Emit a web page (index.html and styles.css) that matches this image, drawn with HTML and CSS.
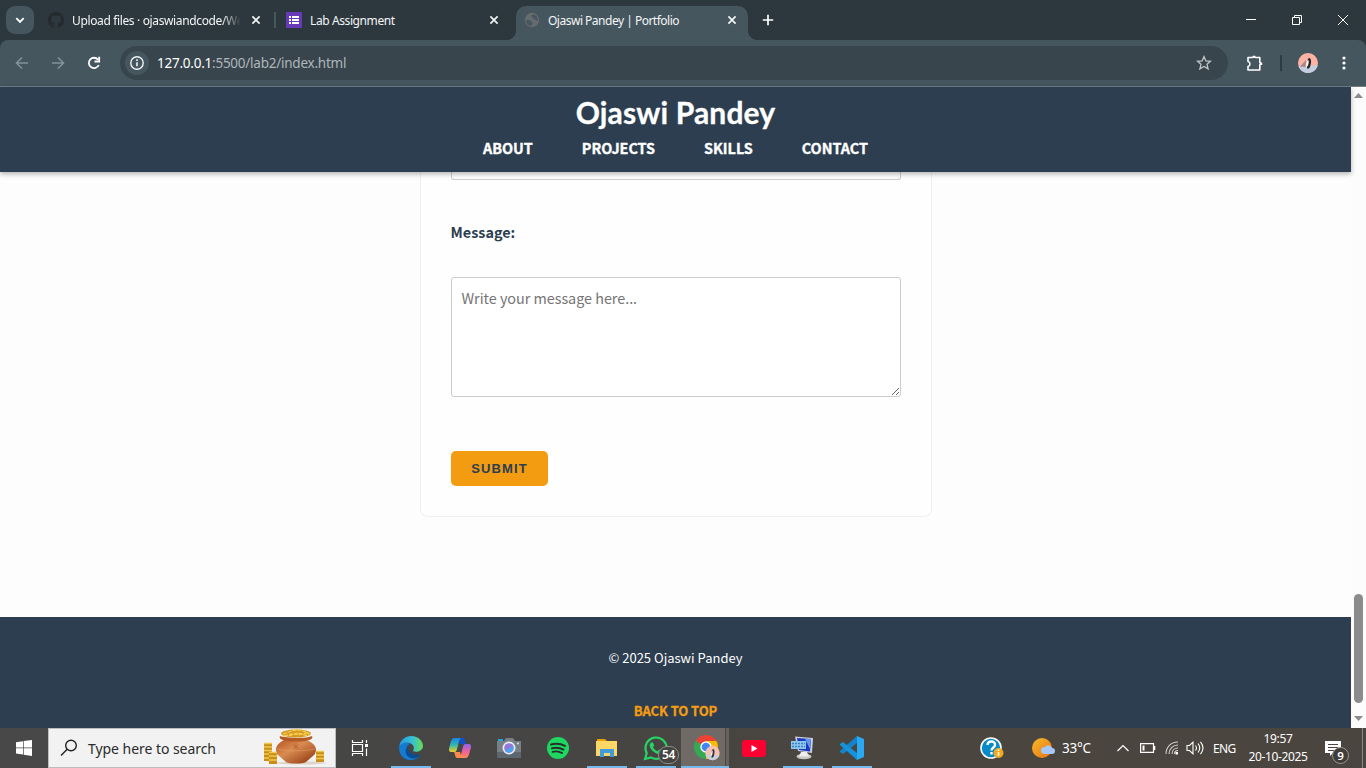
FILE: index.html
```html
<!DOCTYPE html>
<html lang="en">
<head>
<meta charset="utf-8">
<title>Ojaswi Pandey | Portfolio</title>
<link rel="stylesheet" href="styles.css">
</head>
<body>
<div class="screen">
  <div class="tabstrip">
    <div class="tab-search"><svg width="28" height="28" viewBox="0 0 28 28"><path d="M10.3 12.2L14 15.9l3.7-3.7" fill="none" stroke="#fff" stroke-width="1.9"/></svg></div>
    <div class="tab tab-first">
      <svg class="favicon" width="16" height="16" viewBox="0 0 16 16"><path fill="#24292e" d="M8 0C3.58 0 0 3.58 0 8c0 3.54 2.29 6.53 5.47 7.59.4.07.55-.17.55-.38v-1.49C3.8 14.2 3.33 12.65 3.33 12.65c-.36-.92-.89-1.17-.89-1.17-.73-.5.06-.49.06-.49.8.06 1.22.83 1.22.83.71 1.22 1.87.87 2.33.66.07-.52.28-.87.5-1.07-1.77-.2-3.64-.89-3.64-3.95 0-.87.31-1.59.82-2.15-.08-.2-.36-1.02.08-2.12 0 0 .67-.21 2.2.82a7.6 7.6 0 0 1 4 0c1.53-1.04 2.2-.82 2.2-.82.44 1.1.16 1.92.08 2.12.51.56.82 1.27.82 2.15 0 3.07-1.87 3.75-3.65 3.95.29.25.54.73.54 1.48v2.2c0 .21.15.46.55.38A8 8 0 0 0 16 8c0-4.42-3.58-8-8-8z"/></svg>
      <span class="tab-title fade">Upload files · ojaswiandcode/We</span>
      <svg class="tab-close" width="16" height="16" viewBox="0 0 16 16"><path d="M4.4 4.4l7.2 7.2M11.6 4.4l-7.2 7.2"/></svg>
    </div>
    <div class="tab-sep"></div>
    <div class="tab tab-second">
      <svg class="favicon" width="16" height="16" viewBox="0 0 16 16"><rect width="16" height="16" rx="1" fill="#673ab7"/><path fill="#fff" d="M3 4h2v2H3zm3 0h7v2H6zM3 7h2v2H3zm3 0h7v2H6zm-3 3h2v2H3zm3 0h7v2H6z"/></svg>
      <span class="tab-title">Lab Assignment</span>
      <svg class="tab-close" width="16" height="16" viewBox="0 0 16 16"><path d="M4.4 4.4l7.2 7.2M11.6 4.4l-7.2 7.2"/></svg>
    </div>
    <div class="tab tab-active">
      <svg class="favicon" width="16" height="16" viewBox="0 0 16 16"><circle cx="8" cy="8" r="7.2" fill="#666b6e"/><path fill="#45565f" d="M2.1 8.2c1.3-.3 3.1-.3 4.3.4 1 .6.7 1.5 1.7 1.8.8.3.6 1.1 0 1.5-.5.4-.2 1.2-.6 1.9C4.5 13.7 2.1 11.2 2.1 8.2zM8.8 2.2L7.3 3.8l.3 1.5 1.8.4.3 1.7 1.8.1.9 1.3 1.4-.1C14.1 5.3 11.8 2.5 8.8 2.2z"/></svg>
      <span class="tab-title">Ojaswi Pandey | Portfolio</span>
      <svg class="tab-close" width="16" height="16" viewBox="0 0 16 16"><path d="M4.4 4.4l7.2 7.2M11.6 4.4l-7.2 7.2"/></svg>
    </div>
    <div class="new-tab"><svg width="12" height="12" viewBox="0 0 12 12"><path d="M6 .8v10.4M.8 6h10.4" stroke="#fff" stroke-width="1.7"/></svg></div>
    <div class="window-buttons">
      <svg width="46" height="40" viewBox="0 0 46 40"><path d="M18 19.5h10"/></svg>
      <svg width="46" height="40" viewBox="0 0 46 40"><path d="M18.5 17.5h7v7h-7zM20.500 17.500v-2h7v7h-2"/></svg>
      <svg width="46" height="40" viewBox="0 0 46 40"><path d="M18 15l10 10M28 15l-10 10"/></svg>
    </div>
  </div>

  <div class="toolbar">
    <div class="nav-buttons">
      <svg width="36" height="46" viewBox="0 0 36 46"><path class="dim" d="M28 23H17M22 17.5L16.500 23l5.500 5.500"/></svg>
      <svg width="36" height="46" viewBox="0 0 36 46"><path class="dim" d="M16 23h11M22 17.5l5.500 5.500-5.500 5.500"/></svg>
      <svg width="36" height="46" viewBox="0 0 36 46"><path class="bright" d="M26.800 25A5.200 5.200 0 1 1 26 19.600M27.200 16.800v4.700h-4.700"/></svg>
    </div>
    <div class="omnibox">
      <div class="site-info"><svg width="24" height="24" viewBox="0 0 24 24"><circle cx="12" cy="12" r="6.2" fill="none" stroke="#f1f3f4" stroke-width="1.4"/><path d="M12 11.2v4M12 8.300v1.600" stroke="#f1f3f4" stroke-width="1.6"/></svg></div>
      <span class="url"><b>127.0.0.1</b>:5500/lab2/index.html</span>
      <svg class="star" width="16" height="16" viewBox="0 0 16 16"><path d="M8 1.600l1.900 4.300 4.600.4-3.500 3 1.100 4.600L8 11.500l-4.100 2.400L5 9.300l-3.500-3 4.600-.4z" fill="none" stroke="#c0c5c8" stroke-width="1.3"/></svg>
    </div>
    <svg class="extensions" width="18" height="18" viewBox="0 0 18 18"><path d="M2 3.500h4.500a1.800 1 0 0 1 3 0h4.300v4.700a1 1.500 0 0 1 0 2.800v5H2v-3.500c2.600-.5 2.600-4.500 0-5z" fill="none" stroke="#fff" stroke-width="1.6" stroke-linejoin="round"/><path d="M6.700 2.500h2.600M15.300 8.500v2.500" stroke="#fff" stroke-width="1.7"/></svg>
    <div class="toolbar-sep"></div>
    <svg class="avatar" width="20" height="20" viewBox="0 0 20 20"><circle cx="10" cy="10" r="10" fill="#fcb3a3"/><path d="M.5 13l8 .5 11.200-1.500A10 10 0 0 1 2 16z" fill="#c5cee0"/><path d="M2 13.500l6-6.500-.5 7z" fill="#a7878a"/><path d="M9 15.500c0-4 0-10.500 2.500-10.500 2.800 1 1.300 8.500-.5 10.500z" fill="#27272b"/><path d="M8.500 14.500c-.5-4 .6-7.500 1.900-7.500 .8 2 0 6-1.900 7.500z" fill="#fff"/></svg>
    <svg class="kebab" width="4" height="16" viewBox="0 0 4 16"><circle cx="2" cy="3" r="1.6"/><circle cx="2" cy="8" r="1.6"/><circle cx="2" cy="13" r="1.6"/></svg>
  </div>

  <div class="viewport">
    <div class="page">
      <header class="site-header">
        <h1 class="site-name">Ojaswi Pandey</h1>
        <nav class="site-nav"><a>ABOUT</a><a>PROJECTS</a><a>SKILLS</a><a>CONTACT</a></nav>
      </header>
      <main class="content">
        <form class="card">
          <div class="field-end"></div>
          <label class="label" for="message">Message:</label>
          <textarea class="message" id="message" placeholder="Write your message here..."></textarea>
          <button class="submit" type="button">SUBMIT</button>
        </form>
      </main>
      <footer class="site-footer">
        <p class="copyright">© 2025 Ojaswi Pandey</p>
        <a class="back-top">BACK TO TOP</a>
      </footer>
    </div>
    <div class="scrollbar">
      <svg width="15" height="15" viewBox="0 0 15 15"><path d="M3 11l4.500-5 4.500 5z" fill="#8b8b8b"/></svg>
      <div class="thumb"></div>
      <svg width="15" height="15" viewBox="0 0 15 15"><path d="M3 3l4.500 5L12 3z" fill="#8b8b8b"/></svg>
    </div>
  </div>

  <div class="taskbar">
    <div class="start"><svg width="16" height="16" viewBox="0 0 16 16"><path fill="#fff" d="M0 2.200l7-1v6.300H0zM7.700 1.100L16 0v7.500H7.700zM0 8.300h7v6.300l-7-1zM7.700 8.300H16V16l-8.300-1.200z"/></svg></div>
    <div class="search">
      <svg width="18" height="18" viewBox="0 0 18 18"><circle cx="11" cy="6.500" r="5.300" fill="none" stroke="#222" stroke-width="1.400"/><path d="M7.200 10.300L1 16.500" stroke="#222" stroke-width="1.400"/></svg>
      <span class="search-text">Type here to search</span>
      <svg class="pot" width="64" height="38" viewBox="0 0 64 38">
        <defs><linearGradient id="clay" x1="0" x2="1" y1="0" y2="1"><stop stop-color="#b65320"/><stop offset=".4" stop-color="#d98c52"/><stop offset="1" stop-color="#8c310b"/></linearGradient></defs>
        <ellipse cx="38" cy="34" rx="25" ry="1.500" fill="#ddd5c9"/>
        <path d="M21 11C11 16 12 22 15 26l8 7c3 2 17 2 20 0l8-7c3-4 4-10-7-15z" fill="url(#clay)"/>
        <path d="M17 7c5 2 26 3 32 0 1 2 0 3-3 4-6 2-20 2-26 0-3-1-4-2-3-4z" fill="#b45b25"/>
        <ellipse cx="33" cy="4.500" rx="15" ry="4" fill="#d69a20"/>
        <path d="M20 5l6-2 4-1.500 7-.5 6 2 4 2M21 7l8-2 7 .5 8-1.500M26 7l9-3 8 2.500 3-1" stroke="#f5cf55" stroke-width="1.300" fill="none" stroke-dasharray="4 1"/>
        <path d="M14 20c10 2.500 28 2.500 38 0" stroke="#e5a36b" stroke-width=".5" fill="none"/>
        <path d="M33 14v7M30 15.500l6 4M36 15.500l-6 4" stroke="#a84e20" fill="none" stroke-width=".5"/>
        <path d="M1 14h8v18H1zM6 23h8v12H6zM53 22h8v11h-8z" fill="#c98d18"/>
        <path d="M1 14.500h8M1 18h8M1 21.500h8M1 25h5M1 29h5M6 23.500h8M6 27h8M6 31h8M53 22.500h8M53 26h8M53 29.500h8" stroke="#f0c84d" stroke-width="1.300"/>
      </svg>
    </div>
    <div class="cell task-view"><svg width="18" height="18" viewBox="0 0 18 18"><path d="M1.500 1v2.500h10V1M1.500 17v-2.500h10V17M1.500 5.500h10v7h-10zM15.500 1v3M15.500 9.500V17" fill="none" stroke="#fff" stroke-width="1.200"/><rect x="14" y="5" width="3" height="3" fill="#fff"/></svg></div>
    <div class="cell running"><svg width="24" height="24" viewBox="0 0 24 24"><defs><linearGradient id="edgeTop"><stop stop-color="#2597e2"/><stop offset=".55" stop-color="#35bfd5"/><stop offset="1" stop-color="#69de4f"/></linearGradient></defs><path fill="#127bd2" d="M.2 11C2 7 7 5 11 8c-4 1-5 7-1 11 3 3 7 3 11 1C12 29-1 22 .2 11z"/><path fill="url(#edgeTop)" d="M.2 11C1 4 6 0 12 0c8 0 12 6 12 10 0 5-7 7-10 5 3-5-2-9-7-8.500C4 7 1.500 8.500.2 11z"/><path fill="#0c4d92" d="M9.500 10c-2 5 4 10 12 8.500C19 23 12 24 8.500 20S7 12 9.500 10z"/></svg></div>
    <div class="cell"><svg width="24" height="24" viewBox="0 0 24 24"><defs><linearGradient id="copA" x2="0" y2="1"><stop stop-color="#1a85e4"/><stop offset=".5" stop-color="#30b6b3"/><stop offset="1" stop-color="#f5cf20"/></linearGradient><linearGradient id="copB" x2="0" y2="1"><stop stop-color="#8f63ec"/><stop offset=".55" stop-color="#ee619c"/><stop offset="1" stop-color="#ff8c50"/></linearGradient></defs><path fill="#1251c9" d="M10 2h5c2 0 2 4 3 6h-6z"/><path fill="url(#copA)" d="M6 2h7c-3 1-3 14-6 14H3c-3 0-2-4-1-7C3 5 4 2 6 2z"/><path fill="#fb8b45" d="M6 16h6l2 6H9c-2 0-2-5-3-6z"/><path fill="url(#copB)" d="M17 8h4c3 0 2 4 1 7-1 4-2 7-4 7h-7c3-1 3-14 6-14z"/></svg></div>
    <div class="cell"><svg width="24" height="20" viewBox="0 0 24 20"><path fill="#788087" d="M0 3h7l2-3h7l2 3h6v17H0z"/><path fill="#5d666e" d="M0 14h24v6H0z"/><rect x="1" y="1" width="5" height="2" fill="#24a4d8"/><circle cx="12" cy="10" r="6.500" fill="#e9edf2"/><circle cx="12" cy="10" r="4.800" fill="#9477db"/><path d="M8 13a4.800 4.800 0 0 0 8-5z" fill="#45a9e9"/><circle cx="21" cy="5.500" r="1" fill="#ddd"/></svg></div>
    <div class="cell"><svg width="22" height="22" viewBox="0 0 22 22"><circle cx="11" cy="11" r="11" fill="#1ed760"/><path d="M4 7.500c5-1.400 10-.8 14 1.400M4.800 11.300c4-1.100 8-.7 11.700 1.300M5.600 14.800c3.300-.8 6.600-.5 9.500 1.200" fill="none" stroke="#292d2a" stroke-width="1.900" stroke-linecap="round"/></svg></div>
    <div class="cell running"><svg width="22" height="20" viewBox="0 0 22 20"><path d="M1 1h8l2 2H1z" fill="#e9a000"/><path d="M0 3h21v15H0z" fill="#ffd767"/><path d="M4 19v-8h14v8h-4v-4H8v4z" fill="#3f9bdc"/></svg></div>
    <div class="cell running whatsapp"><svg width="25" height="25" viewBox="0 0 25 25"><path d="M2 23l1.700-6A10.600 10.600 0 1 1 8 21.400z" fill="none" stroke="#25d366" stroke-width="2.200"/><path d="M8 6.500h2l1.200 3-1.200 1.700c1 2 2.500 3.200 4.600 4l1.600-1.600 2.900 1.400c.2 2.200-2.200 3.700-4 3.200C11 17 7 13 6.600 9.500c0-1.300.6-2.300 1.400-3z" fill="#25d366"/></svg><span class="count">54</span></div>
    <div class="cell running current"><svg width="26" height="26" viewBox="0 0 26 26"><path d="M12 12L1.600 6A12 12 0 0 1 22.400 6z" fill="#ea4335"/><path d="M12 12H24A12 12 0 0 1 12 24z" fill="#fbbc04"/><path d="M12 12v12A12 12 0 0 1 1.600 6z" fill="#34a853"/><path d="M12 6h10.400A12 12 0 0 1 24 12H12z" fill="#fbbc04"/><circle cx="12" cy="12" r="5.700" fill="#fff"/><circle cx="12" cy="12" r="4.300" fill="#4285f4"/><circle cx="18.500" cy="18" r="7.200" fill="#f6c0b3"/><path d="M11.500 20a7.200 7.200 0 0 0 13.800 0z" fill="#c9cedb"/><path d="M17.500 22.500c-.5-4 0-8.500 2-8.500 2 1.500.5 7.500-.5 8.500z" fill="#343239"/><path d="M17 21.500c-.3-2.500.5-6 1.500-6 .5 1.500 0 5-1.500 6z" fill="#fff"/></svg></div>
    <div class="cell"><svg width="24" height="17" viewBox="0 0 24 17"><rect width="24" height="17" rx="3" fill="#ff0033"/><path d="M9.500 5l6 3.500-6 3.500z" fill="#fff"/></svg></div>
    <div class="cell running"><svg width="25" height="24" viewBox="0 0 25 24"><ellipse cx="14" cy="20.500" rx="7.500" ry="2.800" fill="#c9c9c4"/><path d="M11 16h6l2 4.500H9z" fill="#eee"/><path d="M5 .5l18 1.500-1 15-14-2z" fill="#c9d0db"/><path d="M7 2l14 1-1 12.500L9 14z" fill="#1838bf"/><path d="M15 3l6 0-1 10z" fill="#6894ed"/><path d="M1 5h15v8H1z" fill="#8fc6ee"/><path d="M2 7.500h13M2 10.500h13" stroke="#3983c4" stroke-width="1.500" stroke-dasharray="2 1"/></svg></div>
    <div class="cell running"><svg width="24" height="24" viewBox="0 0 24 24"><path d="M17 0l7 3v18l-7 3z" fill="#2aa9f2"/><path d="M17 0v7L3 18l-3-2v-1z" fill="#1583cb"/><path d="M17 24v-7L3 6 0 8v1z" fill="#1592dc"/></svg></div>
    <div class="tray">
      <svg class="help" width="24" height="22" viewBox="0 0 24 22"><circle cx="11" cy="11" r="10" fill="#078ac9" stroke="#fff" stroke-width="1.600"/><path d="M7.500 8c.2-5 8-4.500 7.500 0 0 2.500-3.500 2.500-3.500 5.500M11.500 15v2.500" fill="none" stroke="#fff" stroke-width="2.400"/><circle cx="18.500" cy="16" r="5" fill="#f5aa1c"/><path d="M18.500 15v4M18.500 12.500v1.500" stroke="#fff" stroke-width="1.500"/></svg>
      <svg class="weather" width="23" height="20" viewBox="0 0 23 20"><defs><linearGradient id="sun" x2="1" y2="1"><stop stop-color="#f5bb29"/><stop offset="1" stop-color="#ee7112"/></linearGradient></defs><circle cx="10" cy="10" r="10" fill="url(#sun)"/><path d="M12 16h8a3 3 0 0 0 0-6 4 4 0 0 0-7-1 3.500 3.500 0 0 0-1 7z" fill="#a5c7fa"/></svg>
      <span class="temp">33°C</span>
      <svg class="chevron" width="12" height="8" viewBox="0 0 12 8"><path d="M.5 7L6 1.500 11.500 7" fill="none" stroke="#fff" stroke-width="1.200"/></svg>
      <svg class="battery" width="16" height="10" viewBox="0 0 16 10"><path d="M.6.600h12.900v8.800H.6zM14.700 3v4" fill="none" stroke="#fff" stroke-width="1.200"/><path d="M2.500 2.500h2v5h-2z" fill="#fff"/></svg>
      <svg class="wifi" width="14" height="14" viewBox="0 0 14 14"><path d="M1 13C1 6 6 1 13 1M4 13c0-5 4-9 9-9M7 13c0-3.500 2.500-6 6-6M9.500 13c0-2 1.500-3.500 3.500-3.500" fill="none" stroke="#d6d4d2" stroke-width="1.100"/><rect x="10.500" y="11" width="2.500" height="2.500" fill="#fff"/></svg>
      <svg class="volume" width="18" height="14" viewBox="0 0 18 14"><path d="M1 4.500h2.500L7 1.200v11.600L3.500 9.500H1zM9.500 4.500q2 2.500 0 5M12 2.500q3.500 4.500 0 9M14.500.8q5 6.200 0 12.400" fill="none" stroke="#fff" stroke-width="1.100"/></svg>
      <span class="lang">ENG</span>
      <div class="clock"><span>19:57</span><span class="date">20-10-2025</span></div>
      <div class="notify"><svg width="16" height="15" viewBox="0 0 16 15"><path d="M0 0h16v12h-8l-3 3v-3H0z" fill="#fff"/><path d="M3 3.500h10M3 6.500h10M3 9.500h6" stroke="#4b4641" stroke-width="1"/></svg><span class="notify-count">9</span></div>
      <div class="show-desktop"></div>
    </div>
  </div>
</div>
</body>
</html>
```
FILE: styles.css
```css
* { box-sizing: border-box; }
body { margin: 0; font-family: "Noto Sans", "Open Sans", sans-serif; }
svg { display: block; flex: none; }
.screen { width: 1366px; height: 768px; display: flex; flex-direction: column; overflow: hidden; background: #2d383e; }

/* browser chrome */
.tabstrip { height: 40px; flex: none; display: flex; background: #2d383e; padding-left: 6px; color: #f3f5f6; }
.tab-search { width: 28px; height: 28px; margin: 6px 6px 0 0; border-radius: 9px; background: #45565f; }
.tab { display: flex; align-items: center; height: 40px; font-size: 12px; letter-spacing: -.5px; }
.tab-title { margin-left: 8px; flex: 1; white-space: nowrap; line-height: 20px; padding-top: 1px; }
.tab-close { margin-left: 8px; }
.tab-close path { stroke: #f3f5f6; stroke-width: 1.7; }
.tab-first { width: 234px; padding: 0 10px 0 8px; }
.tab-first .tab-title { letter-spacing: -.36px; min-width: 0; }
.fade { -webkit-mask-image: linear-gradient(90deg, #000 150px, transparent 169px); mask-image: linear-gradient(90deg, #000 150px, transparent 169px); }
.tab-sep { width: 2px; height: 16px; margin-top: 12px; background: #45565f; }
.tab-second { width: 240px; padding: 0 14px 0 10px; letter-spacing: -.4px; }
.tab-active { position: relative; width: 232px; height: 34px; margin-top: 6px; padding: 0 8px 6px; background: #45565f; border-radius: 10px 10px 0 0; }
.tab-active::before, .tab-active::after { content: ""; position: absolute; bottom: 0; width: 10px; height: 10px; }
.tab-active::before { left: -10px; background: radial-gradient(circle at 0 0, transparent 10px, #45565f 10.5px); }
.tab-active::after { right: -10px; background: radial-gradient(circle at 100% 0, transparent 10px, #45565f 10.5px); }
.new-tab { width: 40px; display: flex; align-items: center; justify-content: center; }
.window-buttons { margin-left: auto; display: flex; }
.window-buttons path { fill: none; stroke: #fff; stroke-width: 1; }
.toolbar { height: 47px; flex: none; display: flex; align-items: center; background: #45565f; border-bottom: 1px solid #6f7d84; border-radius: 8px 8px 0 0; }
.nav-buttons { display: flex; width: 120px; }
.nav-buttons path { fill: none; stroke-width: 1.6; }
.nav-buttons .dim { stroke: #84919a; }
.nav-buttons .bright { stroke: #fff; stroke-width: 1.8; }
.omnibox { width: 1108px; height: 34px; border-radius: 17px; background: #39454c; display: flex; align-items: center; padding: 0 16px 0 5px; }
.site-info { width: 24px; height: 24px; border-radius: 12px; background: #45565f; }
.url { margin-left: 8px; font-size: 13.5px; line-height: 20px; color: #adb6bb; flex: 1; letter-spacing: -.24px; }
.url b { color: #fff; font-weight: 400; }
.extensions { margin-left: 18px; }
.toolbar-sep { width: 2px; height: 16px; background: #2f3b42; margin-left: 16px; }
.avatar { margin-left: 16px; }
.kebab { margin-left: 24px; fill: #fff; }

/* portfolio page */
.viewport { flex: 1; min-height: 0; display: flex; background: #fdfdfd; }
.page { width: 1351px; height: 641px; display: flex; flex-direction: column; font-family: "Noto Sans CJK SC", "Noto Sans", sans-serif; }
.site-header { height: 85px; flex: none; background: #2c3e50; position: relative; z-index: 1; box-shadow: 0 2px 5px rgba(0,0,0,.3); padding-top: 5px; color: #fff; }
.site-name { margin: 0; height: 42px; text-align: center; font: 700 30px/40px Lato, sans-serif; letter-spacing: .15px; -webkit-text-stroke: .3px #fff; }
.site-nav { display: flex; justify-content: center; gap: 49px; font-size: 14.4px; font-weight: 700; line-height: 28px; letter-spacing: -.02px; color: #fff; -webkit-text-stroke: .35px #fff; }
.content { height: 445px; flex: none; display: flex; justify-content: center; align-items: flex-start; }
.card { width: 512px; height: 345px; border: 1px solid #ecf0f1; border-top: 0; border-radius: 0 0 8px 8px; padding: 0 30px; display: flex; flex-direction: column; align-items: flex-start; background: #fefefe; }
.field-end { width: 450px; height: 8px; border: 1px solid #ccc; border-top: 0; border-radius: 0 0 3px 3px; }
.label { margin-top: 40px; height: 24px; font-size: 14.4px; line-height: 24px; font-weight: 700; color: #2c3e50; }
.message { margin-top: 33px; width: 450px; height: 120px; border: 1px solid #ccc; border-radius: 3px; padding: 9px 10px; font: 14.4px/22px "Noto Sans CJK SC", "Noto Sans", sans-serif; letter-spacing: -.03px; resize: vertical; background: #fff; }
.message::placeholder { color: #757575; }
.submit { margin-top: 54px; width: 97px; height: 35px; border: 0; border-radius: 5px; padding: 0 0 0 1px; background: #f39c12; color: #2c3e50; font: 700 13px/15px "Liberation Sans", sans-serif; letter-spacing: 1.15px; }
.site-footer { flex: 1; background: #2c3e50; display: flex; flex-direction: column; align-items: center; padding-top: 29px; overflow: hidden; }
.copyright { margin: 0; height: 24px; line-height: 24px; font-size: 13px; color: #fff; }
.back-top { margin-top: 29px; line-height: 24px; font-size: 13px; font-weight: 700; color: #f39c12; letter-spacing: -.1px; -webkit-text-stroke: .3px #f39c12; }
.scrollbar { width: 15px; background: #fcfcfc; display: flex; flex-direction: column; }
.thumb { width: 9px; height: 109px; border-radius: 5px; margin: 492px 0 auto 3px; background: #8b8b8b; }

/* desktop taskbar */
.taskbar { height: 40px; flex: none; display: flex; background: linear-gradient(90deg, #484848, #464544 40%, #4a453e 65%, #4a453f); color: #fff; }
.start { width: 48px; display: flex; align-items: center; justify-content: center; }
.search { width: 288px; border: 1px solid #bdbdbd; background: #f2f2f2; display: flex; align-items: center; padding-left: 11px; }
.search-text { margin-left: 10px; width: 170px; font-size: 14px; line-height: 20px; padding-top: 1px; color: #2b2b2b; letter-spacing: -.05px; }
.pot { margin-left: 5px; }
.cell { width: 49px; display: flex; align-items: center; justify-content: center; position: relative; }
.task-view { width: 50px; padding-right: 2px; }
.running::after { content: ""; position: absolute; left: 5px; bottom: 0; width: 40px; height: 2px; background: #76b9ed; }
.current { padding-left: 4px; background: linear-gradient(90deg, transparent 1px, #6f6a66 1px 45px, #4b4641 45px 46px, #66615c 46px 49px); }
.current::after { left: 1px; width: 48px; }
.whatsapp { padding-right: 1px; }
.count { position: absolute; left: 27px; top: 18px; width: 21px; height: 18px; border: 1px solid #8b8b88; border-radius: 9px; background: #464440; font-size: 12px; font-weight: 600; line-height: 16px; text-align: center; letter-spacing: -.3px; }
.tray { margin-left: auto; display: flex; align-items: center; }
.weather { margin-left: 28px; }
.temp { width: 30px; margin-left: 7px; font-size: 13.5px; letter-spacing: -.2px; white-space: nowrap; }
.chevron { margin-left: 25px; }
.battery { margin-left: 11px; }
.wifi { margin-left: 9px; }
.volume { margin-left: 7px; }
.lang { width: 24px; margin-left: 9px; font-size: 12px; letter-spacing: -.6px; }
.clock { width: 60px; margin-left: 11px; display: flex; flex-direction: column; align-items: center; font-size: 12px; line-height: 18px; letter-spacing: -.35px; white-space: nowrap; }
.notify { position: relative; margin-left: 17px; }
.notify-count { position: absolute; left: 7px; top: 6px; width: 17px; height: 17px; border: 1px solid #9a9895; border-radius: 9px; background: #403d39; font-size: 11.5px; font-weight: 600; line-height: 15px; text-align: center; }
.show-desktop { width: 4px; height: 40px; margin-left: 21px; border-left: 1px solid #8a8783; }
```
